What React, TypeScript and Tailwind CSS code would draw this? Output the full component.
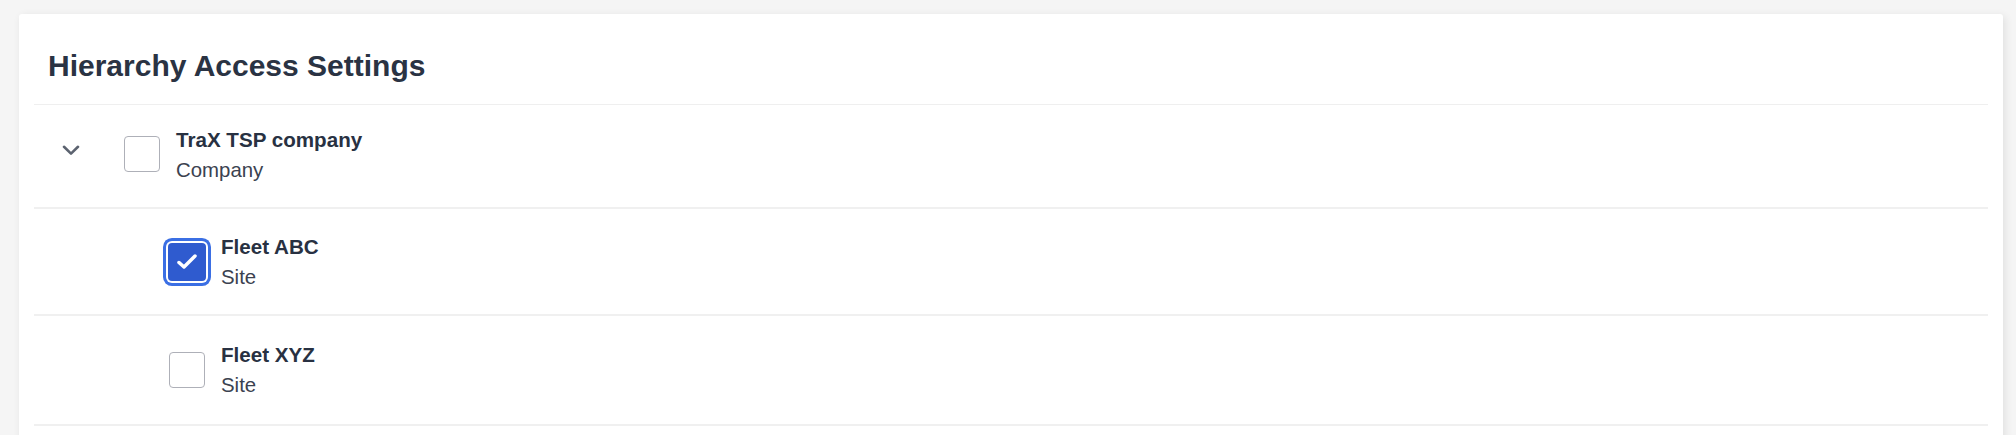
import React from 'react'

interface Node {
  name: string
  type: string
  checked: boolean
}

const sites: Node[] = [
  { name: 'Fleet ABC', type: 'Site', checked: true },
  { name: 'Fleet XYZ', type: 'Site', checked: false },
]

function Checkbox({ checked }: { checked: boolean }) {
  if (checked) {
    return (
      <div className="w-[38px] h-[38px] -mx-[1px] shrink-0 rounded-[4px] bg-[#2f5bcf] shadow-[0_0_0_2px_#ffffff,0_0_0_5px_#3b6fe4] flex items-center justify-center">
        <svg width="38" height="38" viewBox="0 0 38 38" fill="none">
          <path d="M11 19.5 L16 24 L27 13" stroke="#ffffff" strokeWidth="3.5" strokeLinecap="round" strokeLinejoin="round" />
        </svg>
      </div>
    )
  }
  return <div className="w-[36px] h-[36px] shrink-0 rounded-[4px] border border-[#aeb0b8] bg-white" />
}

function Label({ node }: { node: Node }) {
  return (
    <div className="flex flex-col">
      <span className="text-[20.6px] leading-[30px] font-bold text-[#283142]">{node.name}</span>
      <span className="text-[20.4px] leading-[30px] text-[#3b4250]">{node.type}</span>
    </div>
  )
}

export default function App() {
  return (
    <div className="h-[435px] overflow-hidden bg-[#f5f5f5] pt-[14px] pl-[19px] pr-[13px] font-['Liberation_Sans',Arial,sans-serif]">
      <div className="bg-white rounded-[3px] shadow-[2px_2px_8px_rgba(0,0,0,0.09)] pb-[40px]">
        <h2 className="pt-[34px] pl-[29px] mb-[20px] text-[30px] leading-[36px] font-bold text-[#2a3343]">
          Hierarchy Access Settings
        </h2>
        <div className="mx-[15px] border-t border-[#efefef]">
          <div className="h-[104px] flex items-center border-b-2 border-[#f0f0f0]">
            <svg width="18" height="11" viewBox="0 0 18 11" fill="none" className="ml-[28px] mb-[11px] shrink-0">
              <path d="M2 1.8 L9 8.6 L16 1.8" stroke="#5c6370" strokeWidth="2.6" strokeLinecap="round" strokeLinejoin="round" />
            </svg>
            <div className="ml-[44px] mb-[4px]">
              <Checkbox checked={false} />
            </div>
            <div className="ml-[16px] mt-[-2px]">
              <Label node={{ name: 'TraX TSP company', type: 'Company', checked: false }} />
            </div>
          </div>
          {sites.map((s, i) => (
            <div
              key={s.name}
              className={`${i === 0 ? 'h-[107px]' : 'h-[110px]'} flex items-center pl-[135px] border-b-2 border-[#f0f0f0]`}
            >
              <Checkbox checked={s.checked} />
              <div className="ml-[16px]">
                <Label node={s} />
              </div>
            </div>
          ))}
        </div>
      </div>
    </div>
  )
}
